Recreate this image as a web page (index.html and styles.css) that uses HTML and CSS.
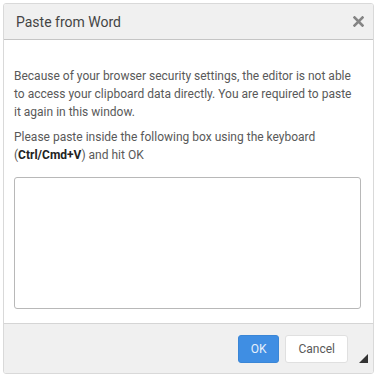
FILE: index.html
```html
<!DOCTYPE html>
<html>
<head>
    <meta charset="UTF-8">
    <title>Paste from Word</title>
    <link rel="stylesheet" href="styles.css">
</head>
<body>

<div class="dialog">
    <div class="dialog-head">
        <div class="dialog-title">Paste from Word</div>
        <svg class="dialog-close" width="11" height="11" viewBox="0 0 11 11">
            <path d="M1.5 1.5 L9.5 9.5 M9.5 1.5 L1.5 9.5" stroke="#858585" stroke-width="2.6" stroke-linecap="square"/>
        </svg>
    </div>
    <div class="dialog-body">
        <p>Because of your browser security settings, the editor is not able to access your clipboard data directly. You are required to paste it again in this window.</p>
        <p>Please paste inside the following box using the keyboard (<b>Ctrl/Cmd+V</b>) and hit OK</p>
        <div class="paste-box"></div>
    </div>
    <div class="dialog-foot">
        <div class="btn primary">OK</div>
        <div class="btn">Cancel</div>
        <div class="resize"></div>
    </div>
</div>

</body>
</html>
```

FILE: styles.css
```css
html {
    box-sizing: border-box;
}
*, *:before, *:after {
    box-sizing: inherit;
}

body{
    margin: 0;
    padding: 3px;
    font-family: Roboto, "Liberation Sans", Arial, sans-serif;
    background: #fff;
}

.dialog{
    width: 371px;
    height: 371px;
    border: 1px solid #d9d9d9;
    border-radius: 3px;
    background: #fff;
    display: flex;
    flex-direction: column;
    overflow: hidden;
}

.dialog-head{
    height: 36px;
    flex-shrink: 0;
    background: #f0f0f0;
    border-bottom: 1px solid #c5c5c5;
    display: flex;
    align-items: center;
    padding: 0 9px 0 12px;
}

.dialog-title{
    flex: 1;
    font-size: 14px;
    color: #444;
}

.dialog-body{
    flex: 1;
    padding: 27px 12px 0 10px;
    font-size: 12px;
    line-height: 18px;
    color: #595959;
}

.dialog-body p{
    margin: 0 8px 7px 0;
}

.dialog-body b{
    color: #222;
}

.paste-box{
    margin-top: 13px;
    height: 132px;
    border: 1px solid #b8b8b8;
    border-radius: 3px;
}

.dialog-foot{
    height: 50px;
    flex-shrink: 0;
    background: #f0f0f0;
    border-top: 1px solid #d5d5d5;
    display: flex;
    justify-content: flex-end;
    align-items: center;
    padding: 0 25px 0 0;
    position: relative;
}

.btn{
    height: 28px;
    padding: 0 12px;
    border: 1px solid #e0e0e0;
    border-radius: 3px;
    background: #fff;
    font-size: 12px;
    line-height: 26px;
    color: #595959;
    margin-left: 6px;
}

.btn.primary{
    background: #3f8ee3;
    border-color: #3a86d6;
    color: #e6f0fb;
}

.resize{
    position: absolute;
    right: 5px;
    bottom: 10px;
    width: 0;
    height: 0;
    border-left: 9px solid transparent;
    border-bottom: 9px solid #333;
}
```
